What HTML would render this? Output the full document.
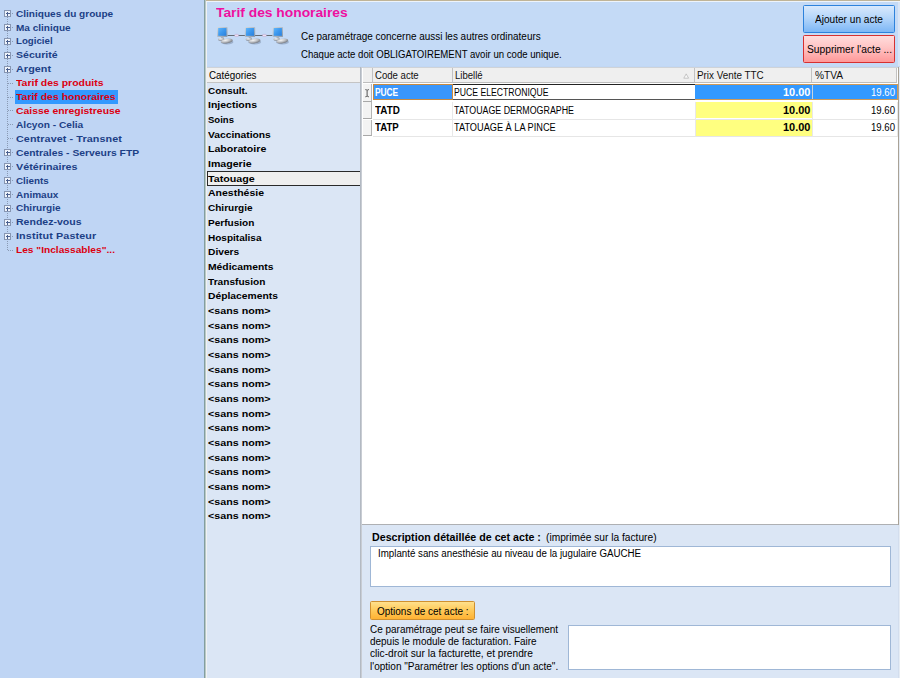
<!DOCTYPE html>
<html>
<head>
<meta charset="utf-8">
<title>Tarif des honoraires</title>
<style>
html,body{margin:0;padding:0;}
body{width:900px;height:678px;overflow:hidden;position:relative;background:#c1d7f4;font-family:"Liberation Sans",sans-serif;font-size:10px;color:#000;}
.abs{position:absolute;}
.t{position:absolute;white-space:nowrap;line-height:14px;height:14px;font-size:10px;transform-origin:0 50%;}
#tree{left:0;top:0;width:204px;height:678px;background:#bfd5f4;}
.tn{color:#1c3f86;}
.tn.red{color:#dc0010;}
#tsel{background:#3399ff;}
.pm{position:absolute;left:4px;width:7px;height:7px;border:1px solid #8796b2;background:#eef3fb;box-sizing:border-box;}
.pm:before{content:"";position:absolute;left:0.5px;top:2px;width:4px;height:1px;background:#4a5f8e;}
.pm:after{content:"";position:absolute;left:2px;top:0.5px;width:1px;height:4px;background:#4a5f8e;}
.hl{position:absolute;height:1px;background:repeating-linear-gradient(90deg,#8a9ab4 0,#8a9ab4 1px,transparent 1px,transparent 2px);}
.vl{position:absolute;width:1px;background:repeating-linear-gradient(180deg,#8a9ab4 0,#8a9ab4 1px,transparent 1px,transparent 2px);}
#vb1{left:204px;top:0;width:1px;height:678px;background:#839e9e;}
#vb2{left:205px;top:0;width:2px;height:678px;background:linear-gradient(90deg,#b9c8c6 0,#b9c8c6 50%,#f0f2f2 50%,#f0f2f2 100%);}
#top1{left:206px;top:0;width:694px;height:1px;background:#c0b497;}
#top2{left:206px;top:1px;width:694px;height:1px;background:#eef4fb;}
#hdr{left:207px;top:2px;width:693px;height:64px;background:#c4daf6;}
#title{color:#ee0fa0;}
.btn{position:absolute;box-sizing:border-box;}
#b1{left:803.3px;top:4.9px;width:91.6px;height:27.9px;border:1.3px solid #2d82dc;background:linear-gradient(#d9e9fc,#b5d6fa 45%,#7db7f6);border-radius:1.5px;}
#b2{left:803.3px;top:35.3px;width:91.6px;height:27.4px;border:1.3px solid #d63030;background:linear-gradient(#ffdcdc,#ffc4c4 45%,#ff9898);border-radius:1.5px;}
#b3{left:370.1px;top:601.2px;width:105.1px;height:18.9px;border:1px solid #cf9030;background:linear-gradient(#ffe08c,#ffcb5c 45%,#ffb233);border-radius:1.5px;}
#cat{left:206.8px;top:67px;width:154px;height:611px;background:#dbe6f5;}
#cathdr{left:206.8px;top:66.5px;width:153.5px;height:16px;background:#f0f0f0;border-bottom:1px solid #c4c4c4;border-top:1px solid #cfd3d8;box-sizing:border-box;}
#catsel{left:206.5px;width:154px;height:14.4px;box-sizing:border-box;border:1px solid #2a2a2a;background:#efefef;}
#sepv{left:360.3px;top:66.5px;width:1.5px;height:612px;background:linear-gradient(90deg,#a9b0ba,#d2d6dc);}
#grid{left:361.8px;top:66.7px;width:538px;height:457px;background:#fff;border-top:1px solid #cfd3d8;box-sizing:border-box;}
#ghbg{left:898.2px;top:66.5px;width:1px;height:458px;background:#a9a296;}
#rs1{left:897.6px;top:2px;width:2.4px;height:64.3px;background:#d9e5f6;}
#rs2{left:899.2px;top:66.5px;width:0.8px;height:612px;background:#e6ecf4;}
#rs3{left:898.2px;top:524.5px;width:1px;height:154px;background:#d3deee;}
.gh{position:absolute;top:68.4px;height:14.6px;background:#efefef;box-sizing:border-box;border-right:1px solid #c2c2c2;border-bottom:1px solid #bdbdbd;}
.rh{position:absolute;box-sizing:border-box;background:#f3f3f3;border-right:1px solid #b4b4b4;border-bottom:1px solid #a8a8a8;}
.c3{background:#ffff80;}
.hline{height:1px;background:#e6e6e6;}
.vline{width:1px;background:#e8e8e8;}
.s1{background:#3a96fb;border:1px solid #c98a3f;box-sizing:border-box;}
.s2{border-top:1.3px solid #222;border-bottom:1.6px solid #555;box-sizing:border-box;background:#fff;}
.s3{background:#3399ff;border:1px solid #d09a58;border-left:none;box-sizing:border-box;}
#bot{left:361.8px;top:523.5px;width:538px;height:155px;background:#dbe6f5;border-top:1px solid #aeb0b3;box-sizing:border-box;}
.tb{background:#fff;border:1px solid #9fb7d6;box-sizing:border-box;}
#tb1{left:370px;top:546px;width:520.7px;height:40.6px;}
#tb2{left:568px;top:624.7px;width:322.7px;height:45px;}

</style>
</head>
<body>
<div id="tree" class="abs"></div>
<div class="vl" style="left:7px;top:13.4px;height:236.6px"></div>
<div class="hl" style="left:8px;top:13px;width:6px"></div>
<div class="pm" style="top:10px"></div>
<div class="t tn " style="left:16.3px;top:6.60px;font-size:9.8px;transform:scaleX(1.0260);letter-spacing:0.000px;font-weight:bold;">Cliniques du groupe</div>
<div class="hl" style="left:8px;top:27px;width:6px"></div>
<div class="pm" style="top:24px"></div>
<div class="t tn " style="left:16.3px;top:20.52px;font-size:9.8px;transform:scaleX(1.0231);letter-spacing:0.000px;font-weight:bold;">Ma clinique</div>
<div class="hl" style="left:8px;top:41px;width:6px"></div>
<div class="pm" style="top:38px"></div>
<div class="t tn " style="left:16.3px;top:34.44px;font-size:9.8px;transform:scaleX(0.9884);letter-spacing:0.000px;font-weight:bold;">Logiciel</div>
<div class="hl" style="left:8px;top:55px;width:6px"></div>
<div class="pm" style="top:52px"></div>
<div class="t tn " style="left:16.3px;top:48.36px;font-size:9.8px;transform:scaleX(1.0756);letter-spacing:0.000px;font-weight:bold;">Sécurité</div>
<div class="hl" style="left:8px;top:69px;width:6px"></div>
<div class="pm" style="top:66px"></div>
<div class="t tn " style="left:16.3px;top:62.28px;font-size:9.8px;transform:scaleX(1.1000);letter-spacing:0.070px;font-weight:bold;">Argent</div>
<div class="hl" style="left:8px;top:83px;width:6px"></div>
<div class="t tn red" style="left:16.3px;top:76.20px;font-size:9.8px;transform:scaleX(1.0678);letter-spacing:0.000px;font-weight:bold;">Tarif des produits</div>
<div class="hl" style="left:8px;top:97px;width:6px"></div>
<div class="abs" id="tsel" style="left:14.6px;top:90.0px;width:103.6px;height:13.6px"></div>
<div class="t tn red sel" style="left:16.3px;top:90.12px;font-size:9.8px;transform:scaleX(1.0654);letter-spacing:0.000px;font-weight:bold;">Tarif des honoraires</div>
<div class="hl" style="left:8px;top:110px;width:6px"></div>
<div class="t tn red" style="left:16.3px;top:104.04px;font-size:9.8px;transform:scaleX(1.0608);letter-spacing:0.000px;font-weight:bold;">Caisse enregistreuse</div>
<div class="hl" style="left:8px;top:124px;width:6px"></div>
<div class="t tn " style="left:16.3px;top:117.96px;font-size:9.8px;transform:scaleX(1.0369);letter-spacing:0.000px;font-weight:bold;">Alcyon - Celia</div>
<div class="hl" style="left:8px;top:138px;width:6px"></div>
<div class="t tn " style="left:16.3px;top:131.88px;font-size:9.8px;transform:scaleX(1.1000);letter-spacing:0.080px;font-weight:bold;">Centravet - Transnet</div>
<div class="hl" style="left:8px;top:152px;width:6px"></div>
<div class="pm" style="top:149px"></div>
<div class="t tn " style="left:16.3px;top:145.80px;font-size:9.8px;transform:scaleX(1.0570);letter-spacing:0.000px;font-weight:bold;">Centrales - Serveurs FTP</div>
<div class="hl" style="left:8px;top:166px;width:6px"></div>
<div class="pm" style="top:163px"></div>
<div class="t tn " style="left:16.3px;top:159.72px;font-size:9.8px;transform:scaleX(1.0978);letter-spacing:0.000px;font-weight:bold;">Vétérinaires</div>
<div class="hl" style="left:8px;top:180px;width:6px"></div>
<div class="pm" style="top:177px"></div>
<div class="t tn " style="left:16.3px;top:173.64px;font-size:9.8px;transform:scaleX(1.0039);letter-spacing:0.000px;font-weight:bold;">Clients</div>
<div class="hl" style="left:8px;top:194px;width:6px"></div>
<div class="pm" style="top:191px"></div>
<div class="t tn " style="left:16.3px;top:187.56px;font-size:9.8px;transform:scaleX(1.0245);letter-spacing:0.000px;font-weight:bold;">Animaux</div>
<div class="hl" style="left:8px;top:208px;width:6px"></div>
<div class="pm" style="top:205px"></div>
<div class="t tn " style="left:16.3px;top:201.48px;font-size:9.8px;transform:scaleX(1.0239);letter-spacing:-0.000px;font-weight:bold;">Chirurgie</div>
<div class="hl" style="left:8px;top:222px;width:6px"></div>
<div class="pm" style="top:219px"></div>
<div class="t tn " style="left:16.3px;top:215.40px;font-size:9.8px;transform:scaleX(1.0756);letter-spacing:0.000px;font-weight:bold;">Rendez-vous</div>
<div class="hl" style="left:8px;top:236px;width:6px"></div>
<div class="pm" style="top:233px"></div>
<div class="t tn " style="left:16.3px;top:229.32px;font-size:9.8px;transform:scaleX(1.1000);letter-spacing:0.110px;font-weight:bold;">Institut Pasteur</div>
<div class="hl" style="left:8px;top:250px;width:6px"></div>
<div class="t tn red" style="left:16.3px;top:243.24px;font-size:9.8px;transform:scaleX(1.0381);letter-spacing:-0.000px;font-weight:bold;">Les &quot;Inclassables&quot;...</div>
<div id="vb1" class="abs"></div><div id="vb2" class="abs"></div><div id="top1" class="abs"></div><div id="top2" class="abs"></div>
<div id="hdr" class="abs"></div>
<div class="t " id="title" style="left:215.7px;top:6.33px;font-size:13.2px;transform:scaleX(1.0467);letter-spacing:0.000px;font-weight:bold;">Tarif des honoraires</div>
<svg class="abs" id="icon" style="left:216px;top:25px" width="80" height="22" viewBox="0 0 80 22">
<defs>
<linearGradient id="scr" x1="0" y1="0" x2="1" y2="1"><stop offset="0" stop-color="#62b6fa"/><stop offset="0.5" stop-color="#3c98ee"/><stop offset="1" stop-color="#2a80dc"/></linearGradient>
<linearGradient id="bez" x1="0" y1="0" x2="1" y2="1"><stop offset="0" stop-color="#d4dbe3"/><stop offset="1" stop-color="#8c99a8"/></linearGradient>
<radialGradient id="kb" cx="0.4" cy="0.3" r="0.8"><stop offset="0" stop-color="#f4f4f4"/><stop offset="0.45" stop-color="#c0c2c6"/><stop offset="1" stop-color="#62666e"/></radialGradient>
<g id="pc">
<ellipse cx="11" cy="17" rx="6.4" ry="2.4" fill="#6f7f9a" opacity="0.45"/>
<rect x="1.1" y="2" width="10.4" height="10" rx="0.8" fill="url(#bez)"/>
<rect x="2.2" y="3" width="8.2" height="7.8" fill="url(#scr)"/>
<path d="M5.2 12 L7.6 12 L8 14 L4.6 14 Z" fill="#a9b0b9"/>
<ellipse cx="5.2" cy="14.4" rx="3.2" ry="1.4" fill="url(#kb)"/>
<ellipse cx="10.8" cy="16" rx="6" ry="2.3" fill="url(#kb)" transform="rotate(-9 10.8 16)"/>
</g>
</defs>
<rect x="11.5" y="10" width="45" height="0.9" fill="#5a5f66"/>
<rect x="18.6" y="9.4" width="4" height="2" rx="0.8" fill="#f0e4f4" stroke="#b48fc0" stroke-width="0.4"/>
<rect x="46.4" y="9.4" width="4" height="2" rx="0.8" fill="#f0e4f4" stroke="#b48fc0" stroke-width="0.4"/>
<use href="#pc" x="0" y="0"/>
<use href="#pc" x="27.7" y="0"/>
<use href="#pc" x="55.5" y="0"/>
</svg>

<div class="t " id="l1" style="left:301.0px;top:29.93px;font-size:10px;transform:scaleX(0.9936);letter-spacing:0.000px;">Ce paramétrage concerne aussi les autres ordinateurs</div>
<div class="t " id="l2" style="left:301.0px;top:47.94px;font-size:10px;transform:scaleX(0.9591);letter-spacing:0.000px;">Chaque acte doit OBLIGATOIREMENT avoir un code unique.</div>
<div class="btn" id="b1"></div>
<div class="btn" id="b2"></div>
<div class="t " id="b1t" style="left:815.0px;top:12.54px;font-size:10px;transform:scaleX(1.0094);letter-spacing:0.000px;">Ajouter un acte</div>
<div class="t " id="b2t" style="left:806.5px;top:43.14px;font-size:10px;transform:scaleX(1.0234);letter-spacing:0.000px;">Supprimer l&#x27;acte ...</div>
<div id="cat" class="abs"></div>
<div id="cathdr" class="abs"></div>
<div class="t " style="left:208.6px;top:68.63px;font-size:10px;transform:scaleX(0.9822);letter-spacing:0.000px;">Catégories</div>
<div class="t ci" style="left:208.0px;top:83.80px;font-size:9.8px;transform:scaleX(1.0103);letter-spacing:0.000px;font-weight:bold;">Consult.</div>
<div class="t ci" style="left:208.0px;top:98.47px;font-size:9.8px;transform:scaleX(1.0712);letter-spacing:0.000px;font-weight:bold;">Injections</div>
<div class="t ci" style="left:208.0px;top:113.14px;font-size:9.8px;transform:scaleX(0.9744);letter-spacing:0.000px;font-weight:bold;">Soins</div>
<div class="t ci" style="left:208.0px;top:127.81px;font-size:9.8px;transform:scaleX(1.0481);letter-spacing:0.000px;font-weight:bold;">Vaccinations</div>
<div class="t ci" style="left:208.0px;top:142.48px;font-size:9.8px;transform:scaleX(1.0814);letter-spacing:0.000px;font-weight:bold;">Laboratoire</div>
<div class="t ci" style="left:208.0px;top:157.15px;font-size:9.8px;transform:scaleX(1.0816);letter-spacing:0.000px;font-weight:bold;">Imagerie</div>
<div class="abs" id="catsel" style="top:171.3px"></div>
<div class="t ci" style="left:208.0px;top:171.82px;font-size:9.8px;transform:scaleX(1.0926);letter-spacing:0.000px;font-weight:bold;">Tatouage</div>
<div class="t ci" style="left:208.0px;top:186.49px;font-size:9.8px;transform:scaleX(1.0710);letter-spacing:0.000px;font-weight:bold;">Anesthésie</div>
<div class="t ci" style="left:208.0px;top:201.16px;font-size:9.8px;transform:scaleX(1.0239);letter-spacing:-0.000px;font-weight:bold;">Chirurgie</div>
<div class="t ci" style="left:208.0px;top:215.83px;font-size:9.8px;transform:scaleX(1.0266);letter-spacing:0.000px;font-weight:bold;">Perfusion</div>
<div class="t ci" style="left:208.0px;top:230.50px;font-size:9.8px;transform:scaleX(1.0233);letter-spacing:0.000px;font-weight:bold;">Hospitalisa</div>
<div class="t ci" style="left:208.0px;top:245.17px;font-size:9.8px;transform:scaleX(1.0446);letter-spacing:0.000px;font-weight:bold;">Divers</div>
<div class="t ci" style="left:208.0px;top:259.84px;font-size:9.8px;transform:scaleX(1.0533);letter-spacing:0.000px;font-weight:bold;">Médicaments</div>
<div class="t ci" style="left:208.0px;top:274.51px;font-size:9.8px;transform:scaleX(1.0334);letter-spacing:-0.000px;font-weight:bold;">Transfusion</div>
<div class="t ci" style="left:208.0px;top:289.18px;font-size:9.8px;transform:scaleX(1.0519);letter-spacing:0.000px;font-weight:bold;">Déplacements</div>
<div class="t ci" style="left:208.0px;top:303.85px;font-size:9.8px;transform:scaleX(1.0928);letter-spacing:0.000px;font-weight:bold;">&lt;sans nom&gt;</div>
<div class="t ci" style="left:208.0px;top:318.52px;font-size:9.8px;transform:scaleX(1.0928);letter-spacing:0.000px;font-weight:bold;">&lt;sans nom&gt;</div>
<div class="t ci" style="left:208.0px;top:333.19px;font-size:9.8px;transform:scaleX(1.0928);letter-spacing:0.000px;font-weight:bold;">&lt;sans nom&gt;</div>
<div class="t ci" style="left:208.0px;top:347.86px;font-size:9.8px;transform:scaleX(1.0928);letter-spacing:0.000px;font-weight:bold;">&lt;sans nom&gt;</div>
<div class="t ci" style="left:208.0px;top:362.53px;font-size:9.8px;transform:scaleX(1.0928);letter-spacing:0.000px;font-weight:bold;">&lt;sans nom&gt;</div>
<div class="t ci" style="left:208.0px;top:377.20px;font-size:9.8px;transform:scaleX(1.0928);letter-spacing:0.000px;font-weight:bold;">&lt;sans nom&gt;</div>
<div class="t ci" style="left:208.0px;top:391.87px;font-size:9.8px;transform:scaleX(1.0928);letter-spacing:0.000px;font-weight:bold;">&lt;sans nom&gt;</div>
<div class="t ci" style="left:208.0px;top:406.54px;font-size:9.8px;transform:scaleX(1.0928);letter-spacing:0.000px;font-weight:bold;">&lt;sans nom&gt;</div>
<div class="t ci" style="left:208.0px;top:421.21px;font-size:9.8px;transform:scaleX(1.0928);letter-spacing:0.000px;font-weight:bold;">&lt;sans nom&gt;</div>
<div class="t ci" style="left:208.0px;top:435.88px;font-size:9.8px;transform:scaleX(1.0928);letter-spacing:0.000px;font-weight:bold;">&lt;sans nom&gt;</div>
<div class="t ci" style="left:208.0px;top:450.55px;font-size:9.8px;transform:scaleX(1.0928);letter-spacing:0.000px;font-weight:bold;">&lt;sans nom&gt;</div>
<div class="t ci" style="left:208.0px;top:465.22px;font-size:9.8px;transform:scaleX(1.0928);letter-spacing:0.000px;font-weight:bold;">&lt;sans nom&gt;</div>
<div class="t ci" style="left:208.0px;top:479.89px;font-size:9.8px;transform:scaleX(1.0928);letter-spacing:0.000px;font-weight:bold;">&lt;sans nom&gt;</div>
<div class="t ci" style="left:208.0px;top:494.56px;font-size:9.8px;transform:scaleX(1.0928);letter-spacing:0.000px;font-weight:bold;">&lt;sans nom&gt;</div>
<div class="t ci" style="left:208.0px;top:509.23px;font-size:9.8px;transform:scaleX(1.0928);letter-spacing:0.000px;font-weight:bold;">&lt;sans nom&gt;</div>
<div id="sepv" class="abs"></div>
<div id="grid" class="abs"></div>
<div class="gh" style="left:363.0px;width:9.5px"></div>
<div class="gh" style="left:372.5px;width:80.0px"></div>
<div class="t " style="left:375.1px;top:69.33px;font-size:10px;transform:scaleX(0.9586);letter-spacing:0.000px;color:#111;">Code acte</div>
<div class="gh" style="left:452.5px;width:242.3px"></div>
<div class="t " style="left:455.1px;top:69.33px;font-size:10px;transform:scaleX(0.9546);letter-spacing:0.000px;color:#111;">Libellé</div>
<div class="gh" style="left:694.8px;width:117.5px"></div>
<div class="t " style="left:697.4px;top:69.33px;font-size:10px;transform:scaleX(0.9864);letter-spacing:0.000px;color:#111;">Prix Vente TTC</div>
<div class="gh" style="left:812.3px;width:84.6px"></div>
<div class="t " style="left:814.9px;top:69.33px;font-size:10px;transform:scaleX(1.0182);letter-spacing:-0.000px;color:#111;">%TVA</div>
<svg class="abs" id="sort" style="left:683px;top:73px" width="7" height="6" viewBox="0 0 7 6"><path d="M0.8 5.2 L3.2 0.9 L5.6 5.2 Z" fill="#fafafa" stroke="#b9b9b9" stroke-width="0.8"/></svg>
<div class="rh" style="left:363px;top:84.2px;width:9.2px;height:17.4px"></div>
<div class="abs s1" style="left:372.5px;top:83.9px;width:80px;height:16.2px"></div>
<div class="abs s2" style="left:452.5px;top:83.9px;width:242.3px;height:16.2px"></div>
<div class="abs s3" style="left:694.8px;top:83.9px;width:203.2px;height:16.2px"></div>
<div class="abs" style="left:812.1px;top:84.9px;width:1px;height:14.2px;background:#c7d3e0"></div>
<div class="t " style="left:375.2px;top:85.94px;font-size:10px;transform:scaleX(0.8400);letter-spacing:-0.101px;font-weight:bold;color:#fff;">PUCE</div>
<div class="t " style="left:454.4px;top:85.94px;font-size:10px;transform:scaleX(0.8642);letter-spacing:0.000px;">PUCE ELECTRONIQUE</div>
<div class="t " style="left:783.2px;top:85.94px;font-size:10px;transform:scaleX(1.0949);letter-spacing:0.000px;font-weight:bold;color:#fff;">10.00</div>
<div class="t " style="left:871.4px;top:85.94px;font-size:10px;transform:scaleX(0.9590);letter-spacing:0.000px;color:#fff;">19.60</div>
<div class="rh" style="left:363px;top:102.0px;width:9.2px;height:16.8px"></div>
<div class="abs c3" style="left:695.2px;top:102.0px;width:116.6px;height:15.7px"></div>
<div class="abs hline" style="left:372.5px;top:118.6px;width:525px"></div>
<div class="abs vline" style="left:452.3px;top:101.5px;height:17.6px"></div>
<div class="abs vline" style="left:694.6px;top:101.5px;height:17.6px"></div>
<div class="abs vline" style="left:812.1px;top:101.5px;height:17.6px"></div>
<div class="abs vline" style="left:897.3px;top:101.5px;height:17.6px"></div>
<div class="t " style="left:375.2px;top:103.73px;font-size:10px;transform:scaleX(0.9850);letter-spacing:0.000px;font-weight:bold;">TATD</div>
<div class="t " style="left:454.4px;top:103.73px;font-size:10px;transform:scaleX(0.8851);letter-spacing:0.000px;">TATOUAGE DERMOGRAPHE</div>
<div class="t " style="left:783.2px;top:103.73px;font-size:10px;transform:scaleX(1.0949);letter-spacing:0.000px;font-weight:bold;">10.00</div>
<div class="t " style="left:871.4px;top:103.73px;font-size:10px;transform:scaleX(0.9590);letter-spacing:0.000px;">19.60</div>
<div class="rh" style="left:363px;top:119.7px;width:9.2px;height:16.8px"></div>
<div class="abs c3" style="left:695.2px;top:120.3px;width:116.6px;height:15.4px"></div>
<div class="abs hline" style="left:372.5px;top:136.3px;width:525px"></div>
<div class="abs vline" style="left:452.3px;top:119.2px;height:17.6px"></div>
<div class="abs vline" style="left:694.6px;top:119.2px;height:17.6px"></div>
<div class="abs vline" style="left:812.1px;top:119.2px;height:17.6px"></div>
<div class="abs vline" style="left:897.3px;top:119.2px;height:17.6px"></div>
<div class="t " style="left:375.2px;top:121.34px;font-size:10px;transform:scaleX(0.9624);letter-spacing:0.000px;font-weight:bold;">TATP</div>
<div class="t " style="left:454.4px;top:121.34px;font-size:10px;transform:scaleX(0.9196);letter-spacing:0.000px;">TATOUAGE À LA PINCE</div>
<div class="t " style="left:783.2px;top:121.34px;font-size:10px;transform:scaleX(1.0949);letter-spacing:0.000px;font-weight:bold;">10.00</div>
<div class="t " style="left:871.4px;top:121.34px;font-size:10px;transform:scaleX(0.9590);letter-spacing:0.000px;">19.60</div>
<svg class="abs" id="ibeam" style="left:365px;top:88.8px" width="4.4" height="9" viewBox="0 0 5 9" preserveAspectRatio="none"><path d="M0.4 0.6 Q1.7 0.6 2.4 1.5 Q3.1 0.6 4.4 0.6 M2.4 1.5 V6.9 M0.4 7.8 Q1.7 7.8 2.4 6.9 Q3.1 7.8 4.4 7.8" fill="none" stroke="#2a2a2a" stroke-width="0.85"/></svg>
<div id="bot" class="abs"></div>
<div class="t " style="left:371.7px;top:531.43px;font-size:10px;transform:scaleX(1.0663);letter-spacing:0.000px;font-weight:bold;">Description détaillée de cet acte :</div>
<div class="t " style="left:545.6px;top:531.24px;font-size:10px;transform:scaleX(1.0206);letter-spacing:0.000px;">(imprimée sur la facture)</div>
<div class="abs tb" id="tb1"></div>
<div class="t " style="left:377.8px;top:547.33px;font-size:10px;transform:scaleX(0.9739);letter-spacing:0.000px;">Implanté sans anesthésie au niveau de la jugulaire GAUCHE</div>
<div class="btn" id="b3"></div>
<div class="t " style="left:376.5px;top:604.83px;font-size:10px;transform:scaleX(0.9976);letter-spacing:0.000px;">Options de cet acte :</div>
<div class="t " style="left:369.9px;top:622.93px;font-size:10px;transform:scaleX(0.9977);letter-spacing:0.000px;">Ce paramétrage peut se faire visuellement</div>
<div class="t " style="left:369.9px;top:635.20px;font-size:10px;transform:scaleX(0.9957);letter-spacing:0.000px;">depuis le module de facturation. Faire</div>
<div class="t " style="left:369.9px;top:647.47px;font-size:10px;transform:scaleX(1.0177);letter-spacing:0.000px;">clic-droit sur la facturette, et prendre</div>
<div class="t " style="left:369.9px;top:659.75px;font-size:10px;transform:scaleX(1.0027);letter-spacing:0.000px;">l&#x27;option &quot;Paramétrer les options d&#x27;un acte&quot;.</div>
<div class="abs tb" id="tb2"></div>
<div id="ghbg" class="abs"></div><div id="rs1" class="abs"></div><div id="rs2" class="abs"></div><div id="rs3" class="abs"></div>
</body>
</html>
